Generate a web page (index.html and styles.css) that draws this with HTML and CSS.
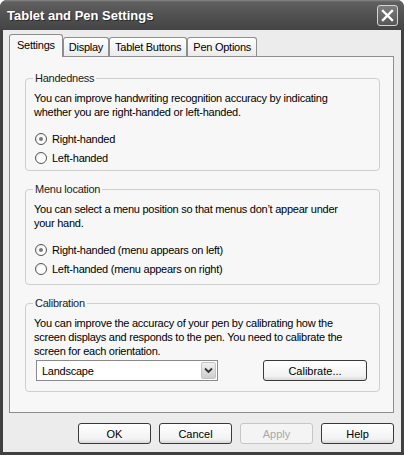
FILE: index.html
```html
<!DOCTYPE html>
<html lang="en">
<head>
    <meta charset="UTF-8">
    <title>Tablet and Pen Settings</title>
    <link rel="stylesheet" href="styles.css">
</head>
<body>

<div class="window">
    <div class="titlebar">
        <span class="title">Tablet and Pen Settings</span>
        <span class="close">
            <svg width="13" height="13" viewBox="0 0 13 13">
                <path d="M2 2 L11 11 M11 2 L2 11" stroke="#fff" stroke-width="2.4" stroke-linecap="square" fill="none"/>
            </svg>
        </span>
    </div>

    <div class="client">
        <div class="tabs">
            <div class="tab active">Settings</div>
            <div class="tab">Display</div>
            <div class="tab">Tablet Buttons</div>
            <div class="tab">Pen Options</div>
        </div>

        <div class="panel">
            <fieldset class="group">
                <legend>Handedness</legend>
                <p class="desc">You can improve handwriting recognition accuracy by indicating whether you are right-handed or left-handed.</p>
                <div class="options">
                    <label class="radio"><span class="dot checked"></span>Right-handed</label>
                    <label class="radio"><span class="dot"></span>Left-handed</label>
                </div>
            </fieldset>

            <fieldset class="group menu">
                <legend>Menu location</legend>
                <p class="desc">You can select a menu position so that menus don’t appear under your hand.</p>
                <div class="options">
                    <label class="radio"><span class="dot checked"></span>Right-handed (menu appears on left)</label>
                    <label class="radio"><span class="dot"></span>Left-handed (menu appears on right)</label>
                </div>
            </fieldset>

            <fieldset class="group calibration">
                <legend>Calibration</legend>
                <p class="desc">You can improve the accuracy of your pen by calibrating how the screen displays and responds to the pen. You need to calibrate the screen for each orientation.</p>
                <div class="calib-row">
                    <div class="combo">
                        <span>Landscape</span>
                        <span class="combo-arrow">
                            <svg width="9" height="7" viewBox="0 0 9 7">
                                <path d="M1 1.5 L4.5 5 L8 1.5" stroke="#333" stroke-width="1.8" fill="none"/>
                            </svg>
                        </span>
                    </div>
                    <button class="btn calibrate">Calibrate...</button>
                </div>
            </fieldset>
        </div>

        <div class="buttons">
            <button class="btn">OK</button>
            <button class="btn">Cancel</button>
            <button class="btn" disabled>Apply</button>
            <button class="btn">Help</button>
        </div>
    </div>
</div>

</body>
</html>
```

FILE: styles.css
```css
body {
    margin: 0;
    font-family: "Liberation Sans", Arial, sans-serif;
    font-size: 11px;
    letter-spacing: -0.25px;
    color: #000;
    background: #fff;
}
.window {
    width: 404px;
    height: 455px;
    display: flex;
    flex-direction: column;
    background: #404040;
    border-radius: 7px 7px 0 0;
}
.titlebar {
    height: 30px;
    flex: none;
    display: flex;
    align-items: center;
    justify-content: space-between;
    padding: 0 6px 0 7px;
    border-radius: 7px 7px 0 0;
    background: linear-gradient(#888 0, #606060 2px, #545454 40%, #444 100%);
}
.title {
    color: #fff;
    font-weight: bold;
    font-size: 13px;
    letter-spacing: 0;
    text-shadow: 1px 1px 0 #2a2a2a;
}
.close {
    width: 19px;
    height: 19px;
    display: flex;
    align-items: center;
    justify-content: center;
    border: 1px solid #d4d4d4;
    border-radius: 3px;
    background: linear-gradient(#7c7c7c, #565656);
}
.client {
    flex: 1;
    margin: 0 3px 3px;
    padding: 5px 7px 0 6px;
    background: #ececec;
}
.tabs {
    display: flex;
    align-items: flex-end;
    height: 21px;
}
.tab {
    height: 18px;
    line-height: 18px;
    padding: 0 5px;
    border: 1px solid #8e8e8e;
    border-bottom: none;
    border-radius: 3px 3px 0 0;
    background: linear-gradient(#ffffff, #ebebeb);
}
.tab.active {
    height: 22px;
    line-height: 20px;
    padding: 0 7px;
    margin-bottom: -1px;
    position: relative;
    background: #f7f7f7;
}
.panel {
    height: 357px;
    box-sizing: border-box;
    padding: 15px 13px 0 15px;
    border: 1px solid #8e8e8e;
    background: #f7f7f7;
}
.group {
    margin: 0 0 12px;
    padding: 6px 8px 3px;
    border: 1px solid #cfcfcf;
    border-radius: 4px;
}
.group.menu {
    padding-bottom: 6px;
}
.group.calibration {
    padding-bottom: 10px;
}
legend {
    padding: 0 2px;
    margin-left: -1px;
    line-height: 13px;
    color: #222;
}
.desc {
    margin: 0;
    max-width: 320px;
    line-height: 14px;
}
.options {
    margin-top: 10px;
}
.radio {
    display: flex;
    align-items: center;
    height: 19px;
}
.dot {
    width: 10px;
    height: 10px;
    margin: 0 5px 0 1px;
    border: 1px solid #555;
    border-radius: 50%;
    background: radial-gradient(circle at 60% 60%, #fff 40%, #dedede);
    display: flex;
    align-items: center;
    justify-content: center;
}
.dot.checked::after {
    content: "";
    width: 4px;
    height: 4px;
    border-radius: 50%;
    background: #7a7a7a;
}
.calib-row {
    display: flex;
    align-items: center;
    justify-content: space-between;
    margin: 2px 4px 0 2px;
}
.combo {
    width: 174px;
    height: 19px;
    display: flex;
    align-items: center;
    justify-content: space-between;
    padding: 0 1px 0 5px;
    border: 1px solid #8a8a8a;
    background: #fff;
}
.combo-arrow {
    width: 15px;
    height: 17px;
    display: flex;
    align-items: center;
    justify-content: center;
    box-sizing: border-box;
    border: 1px solid #c4c4c4;
    border-radius: 2px;
    background: linear-gradient(#efefef, #cdcdcd);
}
.buttons {
    display: flex;
    justify-content: flex-end;
    gap: 8px;
    margin-top: 10px;
}
.btn {
    width: 73px;
    height: 21px;
    padding: 0;
    font-family: "Liberation Sans", Arial, sans-serif;
    font-size: 11px;
    color: #000;
    border: 1px solid #3a3a3a;
    border-radius: 3px;
    background: linear-gradient(#ffffff, #f2f2f2 80%, #d8d8d8);
}
.btn:disabled {
    color: #a8a8a8;
    border-color: #c6c6c6;
    background: #f4f4f4;
}
.btn.calibrate {
    width: 104px;
}
```
